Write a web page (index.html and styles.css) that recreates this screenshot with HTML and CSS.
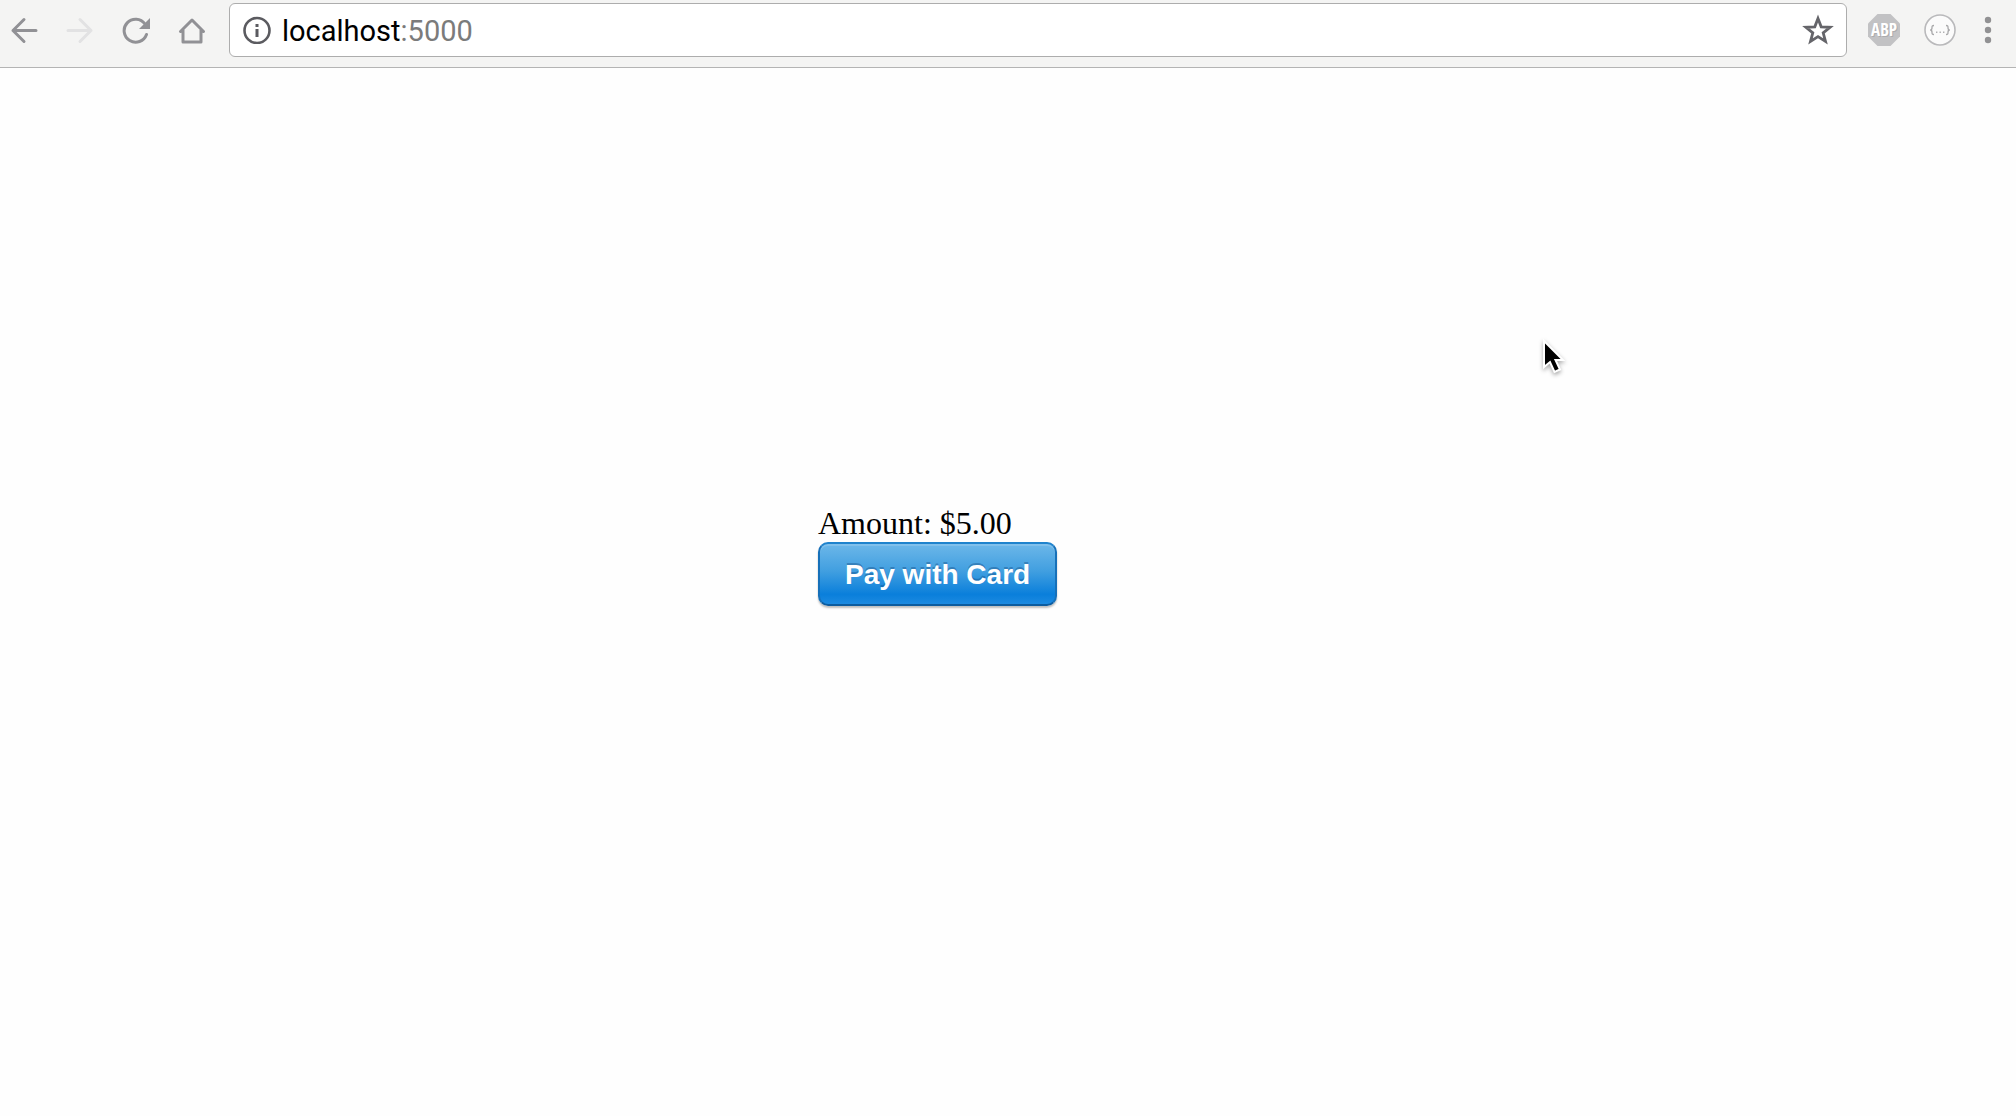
FILE: index.html
```html
<!DOCTYPE html>
<html lang="en">
<head>
<meta charset="utf-8">
<meta name="viewport" content="width=device-width, initial-scale=1">
<title>localhost:5000</title>
<link rel="stylesheet" href="styles.css">
</head>
<body>
<header class="toolbar">
  <nav class="nav" aria-label="Browser">
    <button class="tool" type="button" aria-label="Back">
      <svg class="icon" viewBox="0 0 28 28"><path d="M26 14.500H3M14 3.500L3 14.500l11 11" fill="none" stroke="#919195" stroke-width="3" stroke-linecap="round" stroke-linejoin="round"/></svg>
    </button>
    <button class="tool" type="button" aria-label="Forward" disabled>
      <svg class="icon" viewBox="0 0 28 28"><path d="M2 14.500h23M14 3.500l11 11-11 11" fill="none" stroke="#e2e2e3" stroke-width="3" stroke-linecap="round" stroke-linejoin="round"/></svg>
    </button>
    <button class="tool" type="button" aria-label="Reload">
      <svg class="icon" viewBox="0 0 28 28"><path d="M24.500 18.500A11.500 11.500 0 1 1 23 8" fill="none" stroke="#919195" stroke-width="3" stroke-linecap="round"/><path d="M28 2v11H17z" fill="#919195"/></svg>
    </button>
    <button class="tool" type="button" aria-label="Home">
      <svg class="icon" viewBox="0 0 28 28"><path d="M2.500 15.500L14 4l11.500 11.500M5 14v12h18V14" fill="none" stroke="#919195" stroke-width="3" stroke-linecap="round" stroke-linejoin="round"/></svg>
    </button>
  </nav>
  <div class="address">
    <svg class="icon" viewBox="0 0 28 28" aria-hidden="true"><circle cx="14" cy="14.500" r="12.500" fill="none" stroke="#5b5b60" stroke-width="2.600"/><path d="M12.500 8h3v3h-3zM12.500 13h3v8h-3z" fill="#5b5b60"/></svg>
    <a class="url" href="#">localhost<span class="port">:5000</span></a>
    <button class="tool star" type="button" aria-label="Bookmark">
      <svg class="star-icon" viewBox="0 0 32 32"><path d="M16 4.500l3.200 8.300 8.900.500-6.900 5.500 2.300 8.600-7.500-4.800-7.500 4.800 2.300-8.600-6.900-5.500 8.900-.500z" fill="none" stroke="#65656a" stroke-width="2.800"/></svg>
    </button>
  </div>
  <div class="extensions">
    <button class="tool" type="button" aria-label="ABP">
      <svg class="extension-icon" viewBox="0 0 32 32"><path d="M9.500 0h13L32 9.500v13L22.500 32h-13L0 22.500v-13z" fill="#c2c2c4"/><text class="abp abp-shade" x="17" y="23">ABP</text><text class="abp" x="16" y="22">ABP</text></svg>
    </button>
    <button class="tool" type="button" aria-label="JSON viewer">
      <svg class="extension-icon" viewBox="0 0 32 32"><circle cx="16" cy="16" r="15" fill="#fbfbfb" stroke="#b9b9bb" stroke-width="1.600"/><path d="M10 11.500c-2.200 0-2 1-2 2.300 0 1.500-.300 2.200-1.800 2.200 1.500 0 1.800.700 1.800 2.200 0 1.300-.200 2.300 2 2.300M22 11.500c2.200 0 2 1 2 2.300 0 1.500.300 2.200 1.800 2.200-1.500 0-1.800.700-1.800 2.200 0 1.300.200 2.300-2 2.300" fill="none" stroke="#a8a8aa" stroke-width="1.300"/><path d="M12 17.500h1.400v1.400H12zM15.500 17.500h1.400v1.400h-1.400zM19 17.500h1.400v1.400H19z" fill="#b0b0b2"/></svg>
    </button>
    <button class="tool menu" type="button" aria-label="Menu">
      <svg class="menu-icon" viewBox="0 0 8 28"><g fill="#919193"><circle cx="4" cy="4" r="3.200"/><circle cx="4" cy="14" r="3.200"/><circle cx="4" cy="24" r="3.200"/></g></svg>
    </button>
  </div>
</header>
<main class="page">
  <form class="checkout">
    <label class="amount" for="pay">Amount: $5.00</label>
    <button class="pay" id="pay" type="button">Pay with Card</button>
  </form>
</main>
<svg class="cursor" viewBox="0 0 28 40" aria-hidden="true"><path d="M4 3v26l6-5 4.500 10 5.500-2.500-4.500-9.500H23z" fill="#000" stroke="#fff" stroke-width="2"/></svg>
</body>
</html>
```

FILE: styles.css
```css
* {
  box-sizing: border-box;
}

body {
  margin: 0;
  background: #fefefe;
}

.toolbar {
  display: flex;
  align-items: flex-start;
  height: 68px;
  padding: 3px 24px 0 10px;
  background: #f4f4f3;
  border-bottom: 1px solid #b4b4b4;
}

.nav {
  display: flex;
  align-items: center;
  gap: 28px;
  height: 54px;
  margin-right: 23px;
}

.tool {
  display: flex;
  padding: 0;
  border: 0;
  background: none;
}

.icon {
  display: block;
  flex: none;
  width: 28px;
  height: 28px;
}

.address {
  display: flex;
  flex: 1;
  align-items: center;
  height: 54px;
  padding: 0 12px 0 13px;
  background: #fff;
  border: 1px solid #adadad;
  border-radius: 6px;
}

.url {
  padding-top: 2px;
  margin-left: 11px;
  color: #000;
  font: 29px/36px Roboto, "Liberation Sans", sans-serif;
  text-decoration: none;
}

.port {
  color: #7b7b7b;
}

.star {
  margin-left: auto;
}

.star-icon,
.extension-icon {
  display: block;
  width: 32px;
  height: 32px;
}

.extensions {
  display: flex;
  align-items: center;
  gap: 24px;
  height: 54px;
  margin-left: 21px;
}

.menu {
  margin-left: 4px;
}

.abp {
  fill: #fff;
  font: bold 17px "Liberation Sans Narrow", "Open Sans Condensed", "Roboto Condensed", Roboto, sans-serif;
  text-anchor: middle;
}

.abp-shade {
  fill: #acacae;
}

.menu-icon {
  display: block;
  width: 8px;
  height: 28px;
}

.page {
  padding: 438px 16px 16px;
}

.checkout {
  display: flex;
  flex-direction: column;
  gap: 2px;
  align-items: flex-start;
  max-width: 380px;
  margin: 0 auto;
}

.amount {
  color: #000;
  font: 32px/34px "Liberation Serif", serif;
}

.pay {
  height: 64px;
  padding: 2px 25px 0;
  border: 2px solid;
  border-color: #1f83cd #1670b9 #0c5c9f;
  border-radius: 10px;
  background: linear-gradient(#6cb7e9, #419fe0 45%, #0a7fdb 84%, #1c8ae0);
  box-shadow: 0 2px 2px rgba(0, 0, 0, 0.25), inset 0 2px 0 rgba(255, 255, 255, 0.15);
  color: #fff;
  font: bold 28px/36px "Liberation Sans", sans-serif;
  text-shadow: 0 -2px 0 rgba(0, 40, 90, 0.3);
}

/* Pointer floating over the page */
.cursor {
  position: absolute;
  top: 338px;
  left: 1540px;
  width: 28px;
  height: 40px;
  filter: drop-shadow(0 2px 2px rgba(0, 0, 0, 0.35));
}
```
